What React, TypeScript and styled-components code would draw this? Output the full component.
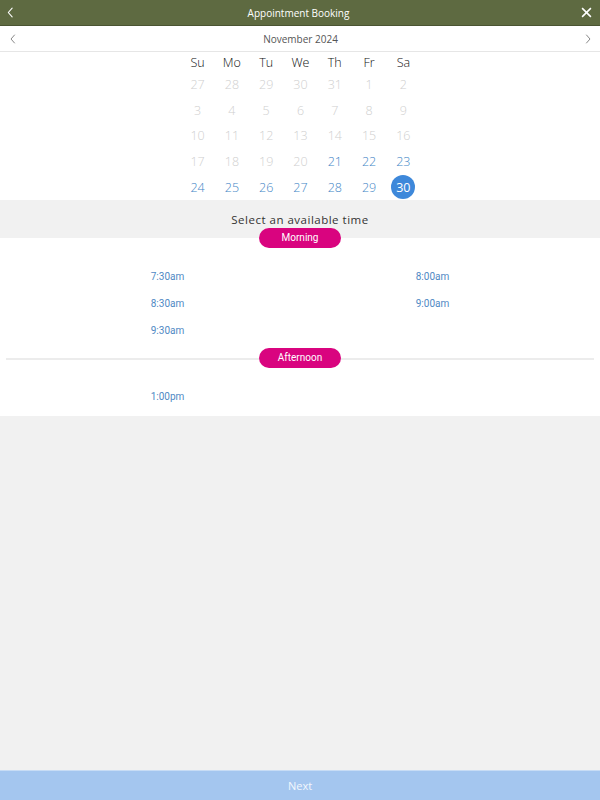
import React, { FC } from 'react';
import styled, { createGlobalStyle } from 'styled-components';

const colors = {
  header: '#5e6a41',
  headerBorder: '#4a5432',
  text: '#333333',
  muted: '#cfcfcf',
  link: '#3f86c6',
  slot: '#5089c4',
  selected: '#3e88da',
  pill: '#d9047f',
  panel: '#f1f1f1',
  divider: '#ececec',
  next: '#a4c6ef',
};

const GlobalStyle = createGlobalStyle`
  html, body {
    margin: 0;
    padding: 0;
    background: ${colors.panel};
  }
  body {
    font-family: 'Open Sans', 'Liberation Sans', sans-serif;
  }
`;

const Page = styled.div`
  display: flex;
  flex-direction: column;
  height: 800px;
  width: 600px;
  background: ${colors.panel};
`;

const TitleBar = styled.header`
  display: flex;
  align-items: center;
  justify-content: space-between;
  height: 25px;
  padding: 0 6px 0 3px;
  background: ${colors.header};
  border-bottom: 1px solid ${colors.headerBorder};
  color: #ffffff;
`;

const Title = styled.h1`
  margin: 0;
  font-size: 10px;
  font-weight: 400;
`;

const IconButton = styled.button<{ $tone?: string }>`
  display: flex;
  align-items: center;
  justify-content: center;
  width: 14px;
  height: 14px;
  padding: 0;
  border: none;
  background: none;
  color: ${({ $tone }) => $tone || 'inherit'};
`;

const MonthBar = styled.div`
  display: flex;
  align-items: center;
  justify-content: space-between;
  height: 25px;
  padding: 0 5px 0 6px;
  background: #ffffff;
  border-bottom: 1px solid #e6e6e6;
  color: #555555;
  font-size: 10px;
`;

const Calendar = styled.div`
  display: grid;
  grid-template-columns: repeat(7, 34.3px);
  grid-auto-rows: 25.7px;
  grid-template-rows: 19.5px;
  justify-content: center;
  padding-left: 1px;
  background: #ffffff;
  font-weight: 300;
`;

const WeekDay = styled.div`
  display: flex;
  align-items: center;
  justify-content: center;
  font-size: 12.5px;
  color: #111111;
  padding-top: 1px;
`;

const DayCell = styled.div<{ $state: 'past' | 'open' | 'selected' }>`
  display: flex;
  align-items: center;
  justify-content: center;
  font-size: 12.5px;
  color: ${({ $state }) =>
    $state === 'past' ? colors.muted : $state === 'open' ? colors.link : '#ffffff'};

  span {
    display: flex;
    align-items: center;
    justify-content: center;
    width: 24px;
    height: 24px;
    border-radius: 50%;
    font-weight: ${({ $state }) => ($state === 'selected' ? 400 : 300)};
    background: ${({ $state }) => ($state === 'selected' ? colors.selected : 'transparent')};
  }
`;

const Prompt = styled.div`
  display: flex;
  justify-content: center;
  padding-top: 12px;
  height: 26px;
  background: ${colors.panel};
  font-size: 11.5px;
  letter-spacing: 0.5px;
  color: #333333;
`;

const Slots = styled.section`
  background: #ffffff;
`;

const PeriodHeader = styled.div<{ $lined?: boolean }>`
  position: relative;
  display: flex;
  justify-content: center;
  margin: 0 6px;
  height: 0;

  &::before {
    content: '';
    position: absolute;
    left: 0;
    right: 0;
    top: 0;
    border-top: 2px solid ${({ $lined }) => ($lined ? colors.divider : 'transparent')};
  }
`;

const Pill = styled.div`
  position: relative;
  display: flex;
  align-items: center;
  justify-content: center;
  width: 82px;
  height: 20px;
  margin-top: -10px;
  border-radius: 10px;
  background: ${colors.pill};
  color: #ffffff;
  font-family: Roboto, 'Liberation Sans', sans-serif;
  font-size: 10px;
`;

const SlotGrid = styled.div<{ $last?: boolean }>`
  display: grid;
  grid-template-columns: 1fr 1fr;
  grid-auto-rows: 27px;
  padding: 25px 35px ${({ $last }) => ($last ? 6 : 14)}px;
`;

const Slot = styled.button`
  display: flex;
  align-items: center;
  justify-content: center;
  padding: 0;
  border: none;
  background: none;
  font-family: Roboto, 'Liberation Sans', sans-serif;
  font-size: 10px;
  color: ${colors.slot};
`;

const Spacer = styled.div`
  flex: 1;
`;

const NextButton = styled.button`
  height: 30px;
  border: none;
  border-top: 1px solid #c7dcf5;
  background: ${colors.next};
  color: #f2f7fd;
  font-family: 'Open Sans', sans-serif;
  font-size: 11px;
`;

const Chevron: FC<{ dir: 'left' | 'right'; size?: number; width?: number }> = ({
  dir,
  size = 10,
  width = 1,
}) => (
  <svg width={size} height={size} viewBox="0 0 10 10" fill="none">
    <path
      d={dir === 'left' ? 'M6.5 1 L3 5 L6.5 9' : 'M3.5 1 L7 5 L3.5 9'}
      stroke="currentColor"
      strokeWidth={width}
      strokeLinecap="round"
      strokeLinejoin="round"
    />
  </svg>
);

const weekDays = ['Su', 'Mo', 'Tu', 'We', 'Th', 'Fr', 'Sa'];
const days = [
  27, 28, 29, 30, 31, 1, 2, 3, 4, 5, 6, 7, 8, 9, 10, 11, 12, 13, 14, 15, 16, 17, 18, 19, 20, 21,
  22, 23, 24, 25, 26, 27, 28, 29, 30,
];

const periods = [
  { name: 'Morning', lined: false, slots: ['7:30am', '8:00am', '8:30am', '9:00am', '9:30am'] },
  { name: 'Afternoon', lined: true, slots: ['1:00pm'] },
];

const App: FC = () => (
  <>
    <GlobalStyle />
    <Page>
      <TitleBar>
        <IconButton aria-label="Back">
          <Chevron dir="left" size={11} width={1} />
        </IconButton>
        <Title>Appointment Booking</Title>
        <IconButton aria-label="Close">
          <svg width="11" height="11" viewBox="0 0 10 10">
            <path d="M1 1 L9 9 M9 1 L1 9" stroke="currentColor" strokeWidth="1.4" />
          </svg>
        </IconButton>
      </TitleBar>
      <MonthBar>
        <IconButton aria-label="Previous month" $tone="#888">
          <Chevron dir="left" />
        </IconButton>
        <span>November 2024</span>
        <IconButton aria-label="Next month" $tone="#888">
          <Chevron dir="right" />
        </IconButton>
      </MonthBar>
      <Calendar>
        {weekDays.map((d) => (
          <WeekDay key={d}>{d}</WeekDay>
        ))}
        {days.map((d, i) => {
          const state = i < 25 ? 'past' : d === 30 && i > 30 ? 'selected' : 'open';
          return (
            <DayCell key={i} $state={state}>
              <span>{d}</span>
            </DayCell>
          );
        })}
      </Calendar>
      <Prompt>Select an available time</Prompt>
      <Slots>
        {periods.map((p, i) => (
          <div key={p.name}>
            <PeriodHeader $lined={p.lined}>
              <Pill>{p.name}</Pill>
            </PeriodHeader>
            <SlotGrid $last={i === periods.length - 1}>
              {p.slots.map((s) => (
                <Slot key={s}>{s}</Slot>
              ))}
            </SlotGrid>
          </div>
        ))}
      </Slots>
      <Spacer />
      <NextButton>Next</NextButton>
    </Page>
  </>
);

export default App;
